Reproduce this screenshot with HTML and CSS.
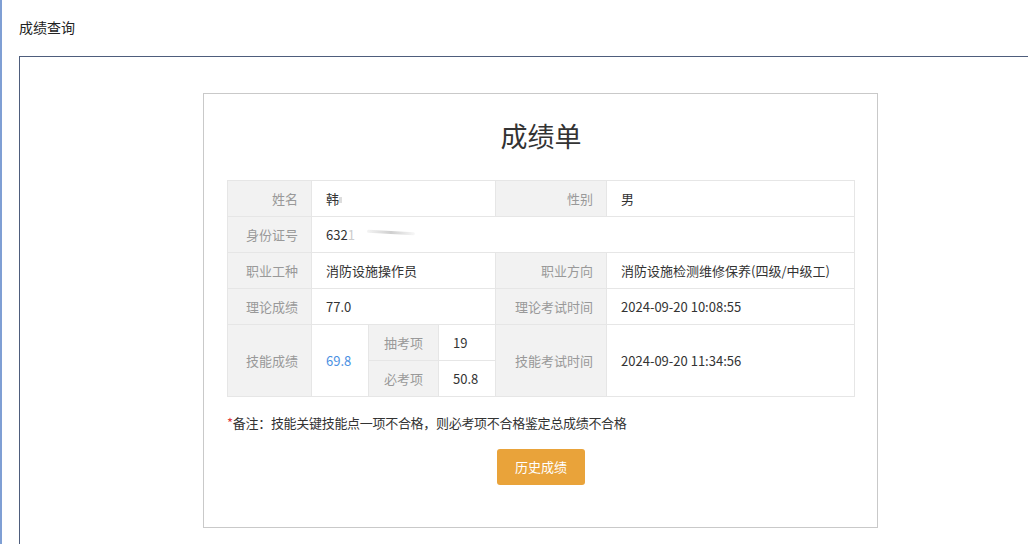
FILE: index.html
```html
<!DOCTYPE html>
<html lang="zh-CN">
<head>
<meta charset="utf-8">
<title>成绩查询</title>
<link rel="stylesheet" href="styles.css">
</head>
<body>
<div class="page">
  <div class="page-title">成绩查询</div>
  <div class="panel">
    <div class="card">
      <h1 class="card-title">成绩单</h1>
      <table class="score">
        <colgroup>
          <col class="c1"><col class="c2a"><col class="c2b"><col class="c2c"><col class="c3"><col class="c4">
        </colgroup>
        <tr>
          <th>姓名</th>
          <td colspan="3">韩<span class="blur-dot"></span></td>
          <th>性别</th>
          <td>男</td>
        </tr>
        <tr>
          <th>身份证号</th>
          <td colspan="5">632<span class="faint">1</span><span class="blur-line"></span></td>
        </tr>
        <tr>
          <th>职业工种</th>
          <td colspan="3">消防设施操作员</td>
          <th>职业方向</th>
          <td>消防设施检测维修保养(四级/中级工)</td>
        </tr>
        <tr>
          <th>理论成绩</th>
          <td colspan="3">77.0</td>
          <th>理论考试时间</th>
          <td>2024-09-20 10:08:55</td>
        </tr>
        <tr>
          <th rowspan="2">技能成绩</th>
          <td rowspan="2" class="blue">69.8</td>
          <th class="sub">抽考项</th>
          <td>19</td>
          <th rowspan="2">技能考试时间</th>
          <td rowspan="2">2024-09-20 11:34:56</td>
        </tr>
        <tr>
          <th class="sub">必考项</th>
          <td>50.8</td>
        </tr>
      </table>
      <p class="note"><span class="star">*</span>备注：技能关键技能点一项不合格，则必考项不合格鉴定总成绩不合格</p>
      <div class="actions"><button class="btn">历史成绩</button></div>
    </div>
  </div>
</div>
</body>
</html>
```

FILE: styles.css
```css
html, body {
  margin: 0;
  padding: 0;
  background: #fff;
  overflow: hidden;
}
body {
  font-family: "Noto Sans CJK SC", "Noto Sans", sans-serif;
  color: #333;
  font-size: 13px;
  border-left: 2px solid #7f9fd4;
  height: 544px;
  box-sizing: border-box;
}
.page {
  padding-left: 17px;
}
.page-title {
  height: 56px;
  line-height: 55px;
  font-size: 14px;
  color: #222;
}
.panel {
  border-top: 1px solid #4e5d7c;
  border-left: 1px solid #4e5d7c;
  width: 1009px;
  height: 488px;
  padding-top: 36px;
  padding-left: 183px;
  box-sizing: border-box;
}
.card {
  width: 675px;
  box-sizing: border-box;
  border: 1px solid #c9c9c9;
  padding: 0 22px 42px 23px;
}
.card-title {
  margin: 22px 0 24px;
  line-height: 40px;
  font-size: 27px;
  font-weight: normal;
  text-align: center;
  color: #333;
}
.score {
  width: 627px;
  border-collapse: collapse;
  table-layout: fixed;
}
.c1 { width: 84px; }
.c2a { width: 57px; }
.c2b { width: 70px; }
.c2c { width: 57px; }
.c3 { width: 111px; }
.c4 { width: 248px; }
.score th, .score td {
  border: 1px solid #e6e6e6;
  height: 35px;
  padding: 0;
  font-size: 13px;
  font-weight: normal;
  white-space: nowrap;
}
.score th {
  background: #f2f2f2;
  color: #999;
  text-align: right;
  padding-right: 13px;
}
.score th.sub {
  text-align: center;
  padding-right: 0;
}
.score td {
  color: #333;
  text-align: left;
  padding-left: 14px;
}
.score td.blue {
  color: #4a90e2;
}
.faint {
  color: #ccc;
}
.blur-dot {
  display: inline-block;
  width: 3px;
  height: 6px;
  background: #ddd;
  vertical-align: middle;
}
.blur-line {
  display: inline-block;
  width: 48px;
  height: 3px;
  margin-left: 12px;
  vertical-align: 6px;
  background: linear-gradient(90deg, rgba(200,200,200,0.2), #cfcfcf 50%, rgba(220,220,220,0.2));
  border-radius: 2px;
  transform: rotate(3deg);
}
.note {
  margin: 16px 0 0;
  line-height: 20px;
  font-size: 13px;
  color: #333;
  letter-spacing: -0.3px;
}
.star {
  color: #e2393c;
}
.actions {
  display: flex;
  justify-content: center;
  margin-top: 16px;
}
.btn {
  width: 88px;
  height: 36px;
  border: none;
  border-radius: 3px;
  background: #e9a33a;
  color: #fff;
  font-family: "Noto Sans CJK SC", sans-serif;
  font-size: 13px;
  line-height: 34px;
  padding: 0;
}
```
